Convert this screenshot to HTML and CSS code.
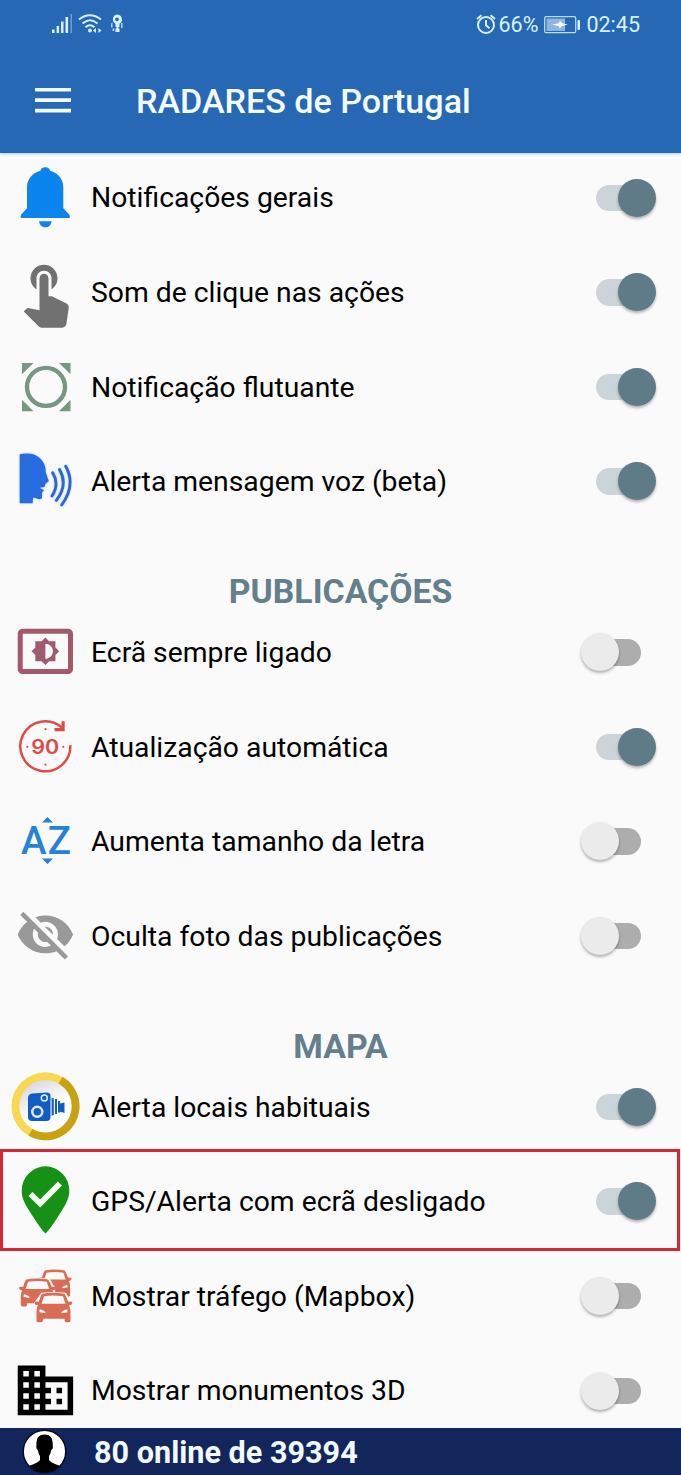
FILE: index.html
```html
<!DOCTYPE html>
<html lang="pt">
<head>
<meta charset="utf-8">
<title>RADARES de Portugal</title>
<link rel="stylesheet" href="styles.css">
</head>
<body>
<div class="app">
  <header class="header">
    <div class="status">
      <svg class="status-left" viewBox="50 10 80 26">
        <g fill="#d9f1ff">
          <path d="M52 29.500h2.600V33H52zM56.600 26h2.500v7h-2.500zM61 21.500h2.500V33H61zM65.500 17h2.600v16h-2.600z"/>
          <path d="M70.500 14h1.500v19h-1.500z" opacity=".4"/>
          <circle cx="90" cy="30.500" r="2"/>
          <path d="M93 30.500l3-2.600v5.200zM101.500 30.500l-3-2.600v5.200z"/>
          <path fill-rule="evenodd" d="M117 14.500a5 5 0 0 1 2.500 9.300V27h-1v1.500h1V32h-4v-3.500h1V27h-1v-3.200a5 5 0 0 1 1.500-9.300zm0 3a1.900 1.900 0 1 0 .01 0z"/>
          <path d="M111 23.500l1.500-1v5H111zM121 23h1.600v5H121zM112.500 28.500h1.800v2.500h-1.800z" opacity=".75"/>
        </g>
        <g fill="none" stroke="#d9f1ff" stroke-width="2">
          <path d="M79 19.500Q90 11 101 19.500M82.500 23.500q7.500-6.500 15 0M85.500 27.200q4.500-4 9 0"/>
        </g>
      </svg>
      <div class="status-right">
        <svg class="alarm" viewBox="475 12 22 22" fill="none" stroke="#d9f1ff" stroke-width="2">
          <circle cx="486" cy="24" r="8"/><path d="M486 19v5.300l3.500 3M477 18l4.500-3.800M495 18l-4.500-3.800"/>
        </svg>
        <span class="pct">66%</span>
        <svg class="battery" viewBox="544 13 38 21">
          <rect x="545.700" y="15.700" width="31" height="16" rx="1.500" fill="none" stroke="#b9dcfa" stroke-width="1.300"/>
          <rect x="547.500" y="17.500" width="18.500" height="12.500" fill="#8fb4e4"/>
          <rect x="578.500" y="19" width="2.500" height="10" rx="1" fill="#d9f1ff"/>
          <path d="M553 23.700l7-1.500.8-2.500 2 2.300 6 1.700-6 1.200-2 2.500-.8-2.200z" fill="#fff"/>
        </svg>
        <span class="clock">02:45</span>
      </div>
    </div>
    <div class="toolbar">
      <svg class="menu" viewBox="0 0 36 25"><path d="M0 0h36v3.600H0zM0 10.300h36v3.600H0zM0 20.800h36v3.600H0z" fill="#f4fcff"/></svg>
      <h1 class="title">RADARES de Portugal</h1>
    </div>
  </header>

  <main class="settings">
    <div class="row">
      <svg class="icon" viewBox="0 150.700 91 94.500" fill="#0b84ee">
        <path d="M40.500 170.500Q41 167 45.300 167T50 170.500C58 172.500 63.300 179 63.300 187V208L69.500 214.500Q70.500 217.700 69 217.700H21.500Q20 217.700 21 214.500L27 208V187C27 179 32.500 172.500 40.500 170.500z"/>
        <path d="M39 221h12.700q-1 6-6.300 6T39 221z"/>
      </svg>
      <span class="label">Notificações gerais</span><span class="switch on"></span>
    </div>
    <div class="row">
      <svg class="icon" viewBox="0 245.250 91 94.500" fill="#717171">
        <path transform="translate(9.500 255.900) scale(3)" d="M9 11.240V7.500C9 6.120 10.120 5 11.500 5S14 6.120 14 7.500v3.740c1.210-.81 2-2.180 2-3.740C16 5.010 13.990 3 11.500 3S7 5.010 7 7.500c0 1.560.79 2.930 2 3.740zm9.840 4.630l-4.540-2.260c-.17-.07-.35-.11-.54-.11H13v-6c0-.83-.67-1.500-1.500-1.500S10 6.670 10 7.500v10.740l-3.430-.72c-.08-.01-.15-.03-.24-.03-.31 0-.59.13-.79.33l-.79.8 4.940 4.940c.27.27.65.44 1.060.44h6.790c.75 0 1.330-.55 1.440-1.280l.75-5.270c.01-.07.02-.14.02-.2 0-.62-.38-1.160-.91-1.380z"/>
      </svg>
      <span class="label">Som de clique nas ações</span><span class="switch on"></span>
    </div>
    <div class="row">
      <svg class="icon" viewBox="0 339.800 91 94.500" fill="#779782">
        <path d="M22 362.700h11.500L22 374zM70.500 362.700H59L70.500 374zM22 411h11.500L22 399.500zM70.500 411H59l11.500-11.500z"/>
        <circle cx="46" cy="386.700" r="19" fill="none" stroke="#779782" stroke-width="4.400"/>
      </svg>
      <span class="label">Notificação flutuante</span><span class="switch on"></span>
    </div>
    <div class="row">
      <svg class="icon" viewBox="0 434.300 91 94.500">
        <g class="halo">
        <path fill="#286bdf" d="M19.700 454.500Q34 452 40.500 459Q46 464.500 45.700 472.500L48.800 481.500L45.500 484L44.500 487.300L39.500 488L44 490.500L42 493V498.500L39.500 499.500L33 497.800L32.700 503.500H19.700z"/>
        <g fill="none" stroke="#2f69c8" stroke-width="2.900" stroke-linecap="round">
          <path d="M52.700 473q7 11.500-.7 23.300M59.500 469.700q9 15.500-3.200 31M65.700 466.500q10.500 19-4 38.700"/>
        </g></g>
      </svg>
      <span class="label">Alerta mensagem voz (beta)</span><span class="switch on"></span>
    </div>

    <h2 class="section">PUBLICAÇÕES</h2>
    <div class="row">
      <svg class="icon" viewBox="0 605.300 91 94.500" fill="#a1596c">
        <path transform="translate(15.200 621.400) scale(2.515)" d="M21 3H3c-1.100 0-2 .9-2 2v14c0 1.100.9 2 2 2h18c1.100 0 2-.9 2-2V5c0-1.100-.9-2-2-2zm0 16.010H3V4.990h18v14.020zM8 16h2.500l1.500 1.500 1.500-1.500H16v-2.500l1.500-1.500-1.500-1.500V8h-2.500L12 6.500 10.500 8H8v2.500L6.500 12 8 13.500V16zm4-7c1.660 0 3 1.340 3 3s-1.340 3-3 3V9z"/>
      </svg>
      <span class="label">Ecrã sempre ligado</span><span class="switch"></span>
    </div>
    <div class="row">
      <svg class="icon" viewBox="0 699.850 91 94.500">
        <g fill="none" stroke="#df4b44" stroke-width="2.500">
          <path d="M70.300 745A25 25 0 1 1 62 727.500"/>
          <path d="M54.500 729.500h8.600v-8.500" stroke-width="3.200"/>
        </g>
        <text x="31.300" y="753.800" class="ninety" textLength="28" lengthAdjust="spacingAndGlyphs">90</text>
        <g fill="#df4b44"><circle cx="45.500" cy="729" r="1.100"/><circle cx="45.500" cy="764.500" r="1.100"/><circle cx="27.300" cy="746.700" r="1.100"/><circle cx="63.300" cy="746.700" r="1.100"/></g>
      </svg>
      <span class="label">Atualização automática</span><span class="switch on"></span>
    </div>
    <div class="row">
      <svg class="icon" viewBox="0 794.400 91 94.500" fill="#2483d4">
        <path d="M42 823l5.500-5.700 5.500 5.700zM42 859l5.500 5.300 5.500-5.300z"/>
        <text x="21" y="854.700" class="az" textLength="50">AZ</text>
      </svg>
      <span class="label">Aumenta tamanho da letra</span><span class="switch"></span>
    </div>
    <div class="row">
      <svg class="icon" viewBox="0 888.900 91 94.500" fill="#999">
        <path transform="translate(15.200 904.100) scale(2.515)" d="M12 7c2.760 0 5 2.240 5 5 0 .65-.13 1.260-.36 1.830l2.920 2.920c1.510-1.260 2.700-2.890 3.430-4.750-1.730-4.390-6-7.500-11-7.500-1.400 0-2.740.25-3.980.7l2.160 2.160C10.740 7.130 11.350 7 12 7zM2 4.270l2.280 2.280.46.46C3.080 8.300 1.780 10.020 1 12c1.730 4.390 6 7.500 11 7.500 1.550 0 3.030-.3 4.380-.84l.42.42L19.730 22 21 20.730 3.270 3 2 4.270zM7.530 9.800l1.550 1.550c-.05.21-.08.43-.08.65 0 1.660 1.340 3 3 3 .22 0 .44-.03.65-.08l1.550 1.550c-.67.33-1.410.53-2.200.53-2.760 0-5-2.240-5-5 0-.79.2-1.530.53-2.200zm4.310-.78l3.150 3.150.02-.16c0-1.660-1.340-3-3-3l-.17.01z"/>
      </svg>
      <span class="label">Oculta foto das publicações</span><span class="switch"></span>
    </div>

    <h2 class="section">MAPA</h2>
    <div class="row">
      <svg class="icon" viewBox="0 1059.900 91 94.500">
        <defs><linearGradient id="disc" x1="0" y1="0" x2=".5" y2="1"><stop offset="0" stop-color="#cfd0d8"/><stop offset=".65" stop-color="#fff"/></linearGradient></defs>
        <circle cx="45.500" cy="1106.200" r="34" fill="#f7d850"/>
        <path d="M62.500 1076.700A34 34 0 0 1 28.500 1135.700z" fill="#c7a312"/>
        <circle cx="45.500" cy="1106.200" r="26.200" fill="url(#disc)"/>
        <g fill="#125cc4">
          <path d="M32 1093.500L47 1092.500q3.500 0 3.500 3.500V1117q0 4-4 4H32q-4 0-4-4V1098q0-4 4-4.500z"/>
          <path d="M51.600 1097.500l2.200.8v16.500l-2.200.8zM55 1099h2v15h-2zM58 1101h2v11.500h-2zM60 1103.500l4.500-1.200v10.500l-4.500-1.200z"/>
        </g>
        <g fill="none" stroke="#dcecff"><circle cx="37.300" cy="1111.700" r="5" stroke-width="2.500"/><circle cx="44.300" cy="1098" r="3" stroke-width="1.500"/></g>
      </svg>
      <span class="label">Alerta locais habituais</span><span class="switch on"></span>
    </div>
    <div class="row marked">
      <svg class="icon" viewBox="0 1154.450 91 94.500">
        <path d="M45.500 1234Q41 1230 32 1215.500C25 1205 21.700 1199 21.700 1191A23.800 24.200 0 0 1 69.300 1191C69.300 1199 66 1205 59 1215.500Q50 1230 45.500 1234z" fill="#179016"/>
        <path d="M30.500 1194.500l9.700 9.500 19.700-20" fill="none" stroke="#f7fff5" stroke-width="5.600"/>
      </svg>
      <span class="label">GPS/Alerta com ecrã desligado</span><span class="switch on"></span>
    </div>
    <div class="row">
      <svg class="icon" viewBox="0 1249 91 94.500">
        <defs>
          <g id="car">
            <path fill="#fafafa" stroke="#fafafa" stroke-width="3" stroke-linejoin="round" d="M1 10L7 1.500Q18 0 30 1.500L35 10V29H1z"/>
            <path fill-rule="evenodd" d="M7 1Q18-1 29.500 1Q31.500 4 33 8.700L37 9Q37.500 12.500 34 12.500Q35.500 15 35.500 19V28Q35.500 29.500 33.500 29.500H31Q29.500 29.500 29.500 26H8Q8 29.500 6.500 29.500H3.500Q1.500 29.500 1.500 28V19Q1.500 15 3 12.500Q-1 12.500 0 9L4 8.700Q5 4 7 1zM9 3.500L6.500 11H30.500L28 3.500Q18 2 9 3.500zM4.500 16.500V19.500L10.500 20.500Q11 18 4.500 16.500zM32.500 16.500V19.500L26.500 20.500Q26 18 32.500 16.500z"/>
          </g>
        </defs>
        <g fill="#d96c55">
          <use href="#car" transform="translate(38.500 1269.500) scale(.89 .92)"/>
          <use href="#car" transform="translate(19.300 1278.500) scale(.98 .95)"/>
          <use href="#car" x="35" y="1292.800"/>
        </g>
      </svg>
      <span class="label">Mostrar tráfego (Mapbox)</span><span class="switch"></span>
    </div>
    <div class="row">
      <svg class="icon" viewBox="0 1343.500 91 94.500">
        <path transform="translate(12.200 1356.700) scale(2.770)" d="M12 7V3H2v18h20V7H12zM6 19H4v-2h2v2zm0-4H4v-2h2v2zm0-4H4V9h2v2zm0-4H4V5h2v2zm4 12H8v-2h2v2zm0-4H8v-2h2v2zm0-4H8V9h2v2zm0-4H8V5h2v2zm10 12h-8v-2h2v-2h-2v-2h2v-2h-2V9h8v10zm-2-8h-2v2h2v-2zm0 4h-2v2h2v-2z"/>
      </svg>
      <span class="label">Mostrar monumentos 3D</span><span class="switch"></span>
    </div>
  </main>

  <footer class="footer">
    <svg class="avatar" viewBox="22 1429 45 46">
      <defs><clipPath id="face"><circle cx="44.500" cy="1451.500" r="21"/></clipPath></defs>
      <circle cx="44.500" cy="1451.500" r="21.300" fill="#fff" stroke="#050a20" stroke-width="1.500"/>
      <path clip-path="url(#face)" d="M36.500 1445Q35.500 1434.500 44.500 1434.500T52.700 1445Q53.500 1449 51.300 1450Q50.500 1454 49 1456V1460Q51 1463 60.500 1466L62 1475H27L28.500 1466Q38 1463 40 1460V1456Q38.500 1454 37.700 1450Q35.700 1449 36.500 1445z"/>
    </svg>
    <span class="online">80 online de 39394</span>
  </footer>
</div>
</body>
</html>
```

FILE: styles.css
```css
*, *::before, *::after { box-sizing: border-box; }
body { margin: 0; background: #fafafa; font-family: Roboto, sans-serif; color: #000; }
.app { display: flex; flex-direction: column; width: 681px; height: 1475px; overflow: hidden; }

.header { flex: none; height: 153px; background: #2768b5; position: relative; z-index: 1; box-shadow: 0 1px 3px #a8cdf5; }
.status { display: flex; justify-content: space-between; height: 48px; padding: 10px 41px 0 50px; }
.status-left { width: 80px; height: 26px; }
.status-right { display: flex; align-items: center; height: 28px; color: #d9f1ff; font-size: 21.500px; }
.alarm { width: 22px; height: 22px; margin-right: 2px; }
.battery { width: 38px; height: 21px; margin: 0 5px; }
.toolbar { display: flex; align-items: center; height: 105px; padding: 0 35px; }
.menu { width: 36px; height: 25px; margin-bottom: 1px; }
.title { margin: 0 0 0 65px; font-size: 34.100px; font-weight: 500; line-height: 40px; color: #f4fcff; white-space: nowrap; }

.settings { flex: 1; min-height: 0; margin-top: -2.300px; overflow: hidden; }
.row { position: relative; display: flex; align-items: center; height: 94.550px; padding-right: 40.500px; }
.icon { flex: none; width: 91px; height: 94.500px; }
.label { flex: 1; padding-top: 1px; font-size: 28.300px; line-height: 36px; white-space: nowrap; }
.section { display: flex; align-items: flex-end; justify-content: center; height: 76.400px; margin: 0; padding: 0 0 -8px; font-size: 33.800px; font-weight: 700; line-height: 26px; color: #647f8b; }
.halo { filter: drop-shadow(0 0 1px #a9ccff); }
.ninety { font: 600 19.500px Inter, sans-serif; fill: #df4b44; }
.az { font: 500 38.500px Roboto, sans-serif; }

.switch { position: relative; flex: none; width: 45px; height: 26.500px; border-radius: 14px; background: #adadad; }
.switch::after { content: ""; position: absolute; top: -6px; left: -15px; width: 38px; height: 38px; border-radius: 50%; background: #ebebeb; box-shadow: 0 2px 3px rgba(0, 0, 0, .3); }
.switch.on { background: #cbd5d9; }
.switch.on::after { left: 22.300px; background: #5e7b87; }
.marked::before { content: ""; position: absolute; top: -5.500px; left: 0; width: 680px; height: 102px; border: 3px solid #d32834; }

.footer { flex: none; display: flex; align-items: center; height: 47px; padding-left: 22px; background: #13265c; }
.avatar { width: 45px; height: 46px; }
.online { margin-left: 27px; padding-top: 2px; font-size: 30.600px; font-weight: 700; color: #f2faff; white-space: nowrap; }
```
